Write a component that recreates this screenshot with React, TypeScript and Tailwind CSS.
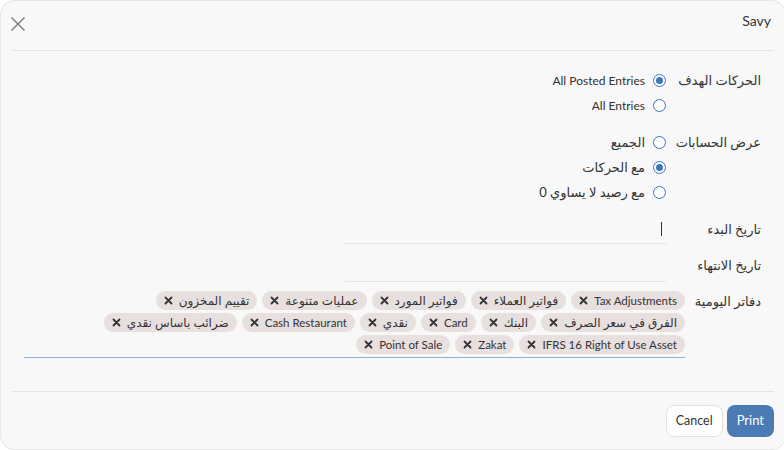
import React from 'react'

const font = { fontFamily: 'Lato, "DejaVu Sans", sans-serif' }

const tags = [
  'Tax Adjustments',
  'فواتير العملاء',
  'فواتير المورد',
  'عمليات متنوعة',
  'تقييم المخزون',
  'الفرق في سعر الصرف',
  'البنك',
  'Card',
  'نقدي',
  'Cash Restaurant',
  'ضرائب باساس نقدي',
  'IFRS 16 Right of Use Asset',
  'Zakat',
  'Point of Sale',
]

const isLatin = (s: string) => /[A-Za-z]/.test(s)

function Radio({ checked }: { checked?: boolean }) {
  return (
    <span className="flex h-[13px] w-[13px] shrink-0 items-center justify-center rounded-full border-[1.5px] border-[#3d76b9] bg-white">
      {checked && <span className="h-[7px] w-[7px] rounded-full bg-[#3d76b9]" />}
    </span>
  )
}

function RadioRow({ label, checked }: { label: string; checked?: boolean }) {
  return (
    <div className="flex h-[25px] items-center gap-[8px]">
      <Radio checked={checked} />
      <span className={isLatin(label) ? 'text-[12px] text-[#333]' : 'text-[13px] text-[#333]'}>{label}</span>
    </div>
  )
}

function Tag({ text }: { text: string }) {
  return (
    <span className="flex h-[19px] items-center gap-[6px] rounded-full bg-[#e8dfdf] px-[8px] leading-none text-[#333]">
      <span className={isLatin(text) ? 'text-[11.5px]' : 'text-[12px]'}>{text}</span>
      <svg width="9" height="9" viewBox="0 0 9 9" className="shrink-0">
        <path d="M1.5 1.5 L7.5 7.5 M7.5 1.5 L1.5 7.5" stroke="#333" strokeWidth="1.8" strokeLinecap="round" />
      </svg>
    </span>
  )
}

export default function App() {
  return (
    <div className="h-[450px] w-[784px] overflow-hidden bg-white" style={font}>
      <div dir="rtl" className="flex h-[450px] w-[786px] flex-col rounded-[14px] border border-[#e6e6e6] bg-[#f8f8f8]">
        {/* Header */}
        <div className="mx-[11px] flex h-[50px] shrink-0 items-center justify-between border-b border-[#e3e3e6]">
          <span className="-mt-[11px] pr-[3px] text-[14px] text-[#333]">Savy</span>
          <svg width="16" height="16" viewBox="0 0 16 16" className="-mt-[4px] -ml-[2px]">
            <path d="M1.5 1.5 L14.5 14.5 M14.5 1.5 L1.5 14.5" stroke="#7a7a7a" strokeWidth="1.4" />
          </svg>
        </div>

        {/* Body */}
        <div className="flex flex-1 flex-col pr-[24px] pl-[23px] pt-[17px]">
          <div className="flex">
            <div className="w-[95px] pt-[2px] text-[13px] leading-[20px] text-[#333]">الحركات الهدف</div>
            <div className="flex flex-col">
              <RadioRow label="All Posted Entries" checked />
              <RadioRow label="All Entries" />
            </div>
          </div>

          <div className="mt-[12px] flex">
            <div className="w-[95px] pt-[2px] text-[13px] leading-[20px] text-[#333]">عرض الحسابات</div>
            <div className="flex flex-col">
              <RadioRow label="الجميع" />
              <RadioRow label="مع الحركات" checked />
              <RadioRow label="مع رصيد لا يساوي 0" />
            </div>
          </div>

          <div className="mt-[8px] flex">
            <div className="w-[95px] pt-[6px] text-[13px] leading-[20px] text-[#333]">تاريخ البدء</div>
            <div className="flex h-[31px] w-[321px] items-center border-b border-[#e3e3e8] pr-[4px]">
              <span className="mt-[2px] h-[14px] w-px bg-[#333]" />
            </div>
          </div>

          <div className="flex">
            <div className="w-[95px] pt-[11px] text-[13px] leading-[20px] text-[#333]">تاريخ الانتهاء</div>
            <div className="h-[38px] w-[321px] border-b border-[#e3e3e8]" />
          </div>

          <div className="mt-[9px] flex">
            <div className="w-[76px] text-[13px] leading-[20px] text-[#333]">دفاتر اليومية</div>
            <div className="flex w-[661px] flex-wrap gap-x-[5px] gap-y-[3px] border-b border-[#8fb0d6] pb-[3px]">
              {tags.map((t) => (
                <Tag key={t} text={t} />
              ))}
            </div>
          </div>
        </div>

        {/* Footer */}
        <div className="mx-[11px] flex shrink-0 items-center gap-[4px] border-t border-[#e3e3e6] pt-[13px] pb-[12px]">
          <button className="h-[32px] rounded-[8px] bg-[#4a7bb4] px-[10px] text-[13px] text-white">Print</button>
          <button className="h-[32px] rounded-[8px] border border-[#e2e2e2] bg-white px-[9px] text-[12.5px] text-[#333]">Cancel</button>
        </div>
      </div>
    </div>
  )
}
